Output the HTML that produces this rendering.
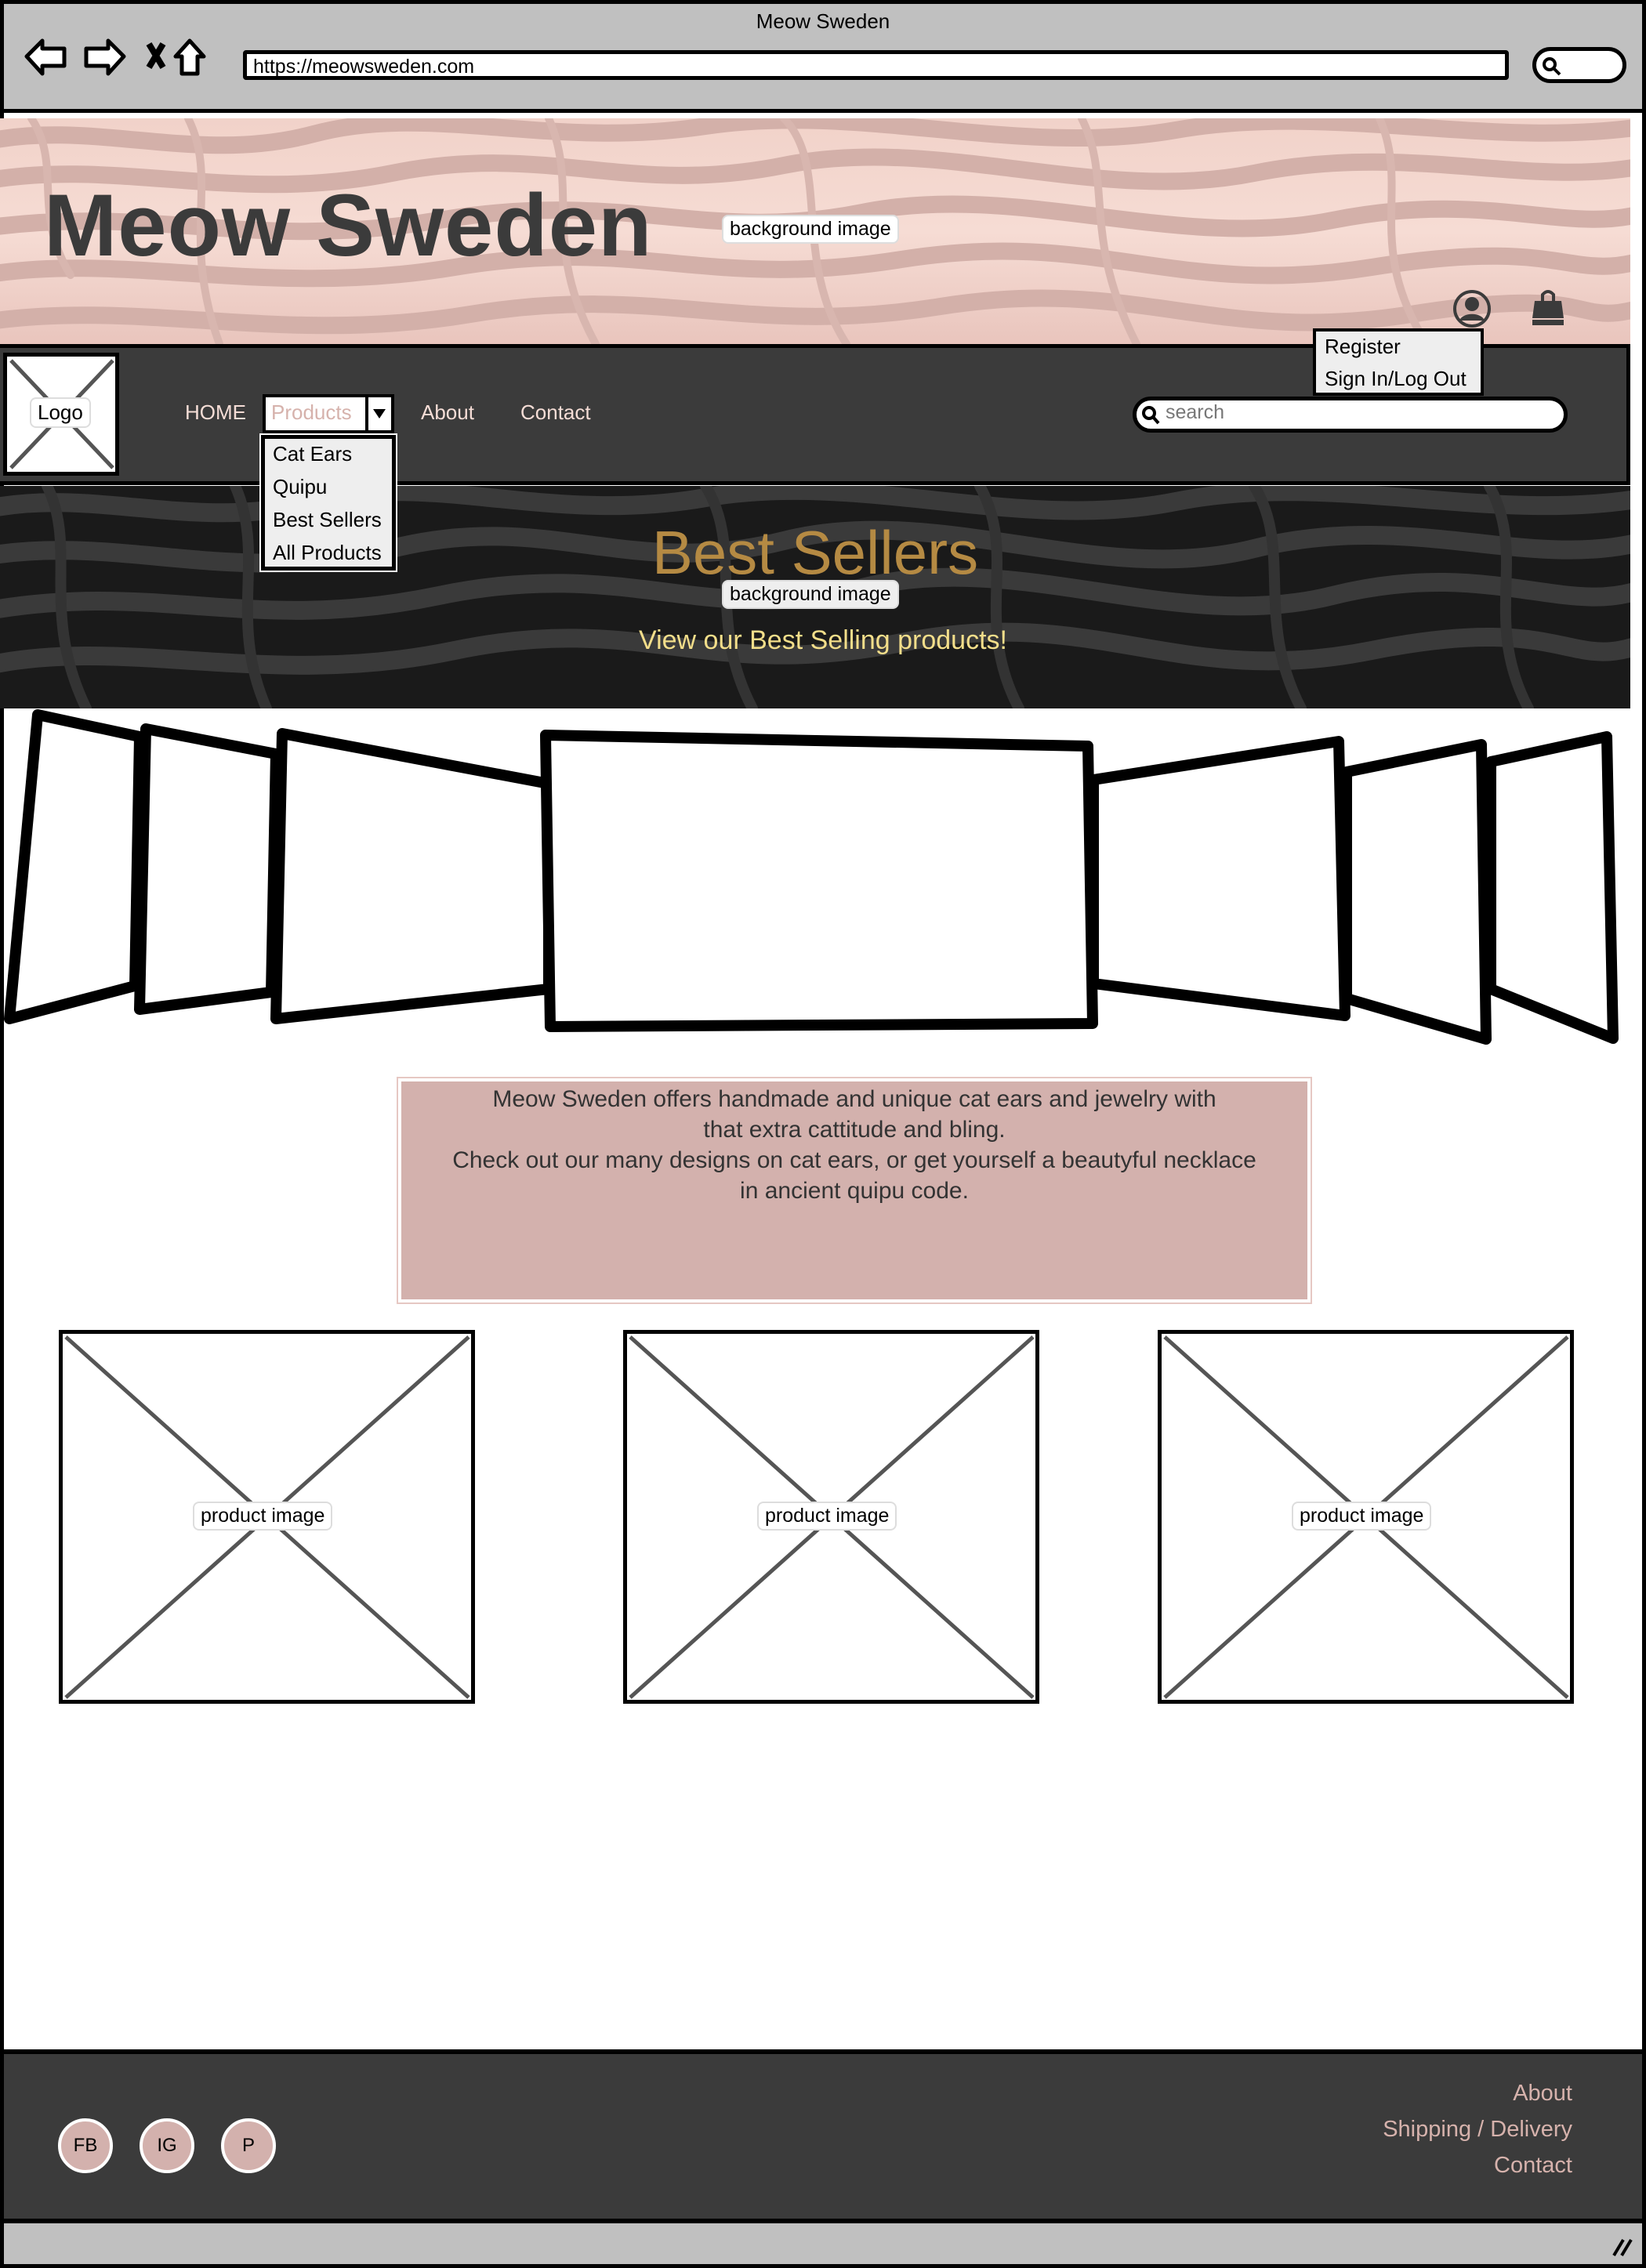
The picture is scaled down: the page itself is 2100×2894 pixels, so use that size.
<!DOCTYPE html>
<html><head><meta charset="utf-8"><style>
*{margin:0;padding:0;box-sizing:border-box}
body{width:2100px;height:2894px;position:relative;overflow:hidden;background:#fff;font-family:"Liberation Sans",sans-serif}
.a{position:absolute}
.lbl{position:absolute;background:#fff;border:2px solid #ddd;border-radius:8px;font-size:25px;color:#000;padding:2px 8px;white-space:nowrap}
</style></head><body>
<div class="a" style="left:0;top:0;width:2100px;height:2894px;border:5px solid #000;"></div>
<div class="a" style="left:5px;top:5px;width:2090px;height:139px;background:#c0c0c0;border-bottom:5px solid #000"></div>
<div class="a" style="left:0;top:12px;width:2100px;text-align:center;font-size:26px;color:#000">Meow Sweden</div>
<svg class="a" style="left:28px;top:44px" width="240" height="60" viewBox="0 0 240 60">
<path d="M6 28 L26 8 L26 18 L54 18 L54 40 L26 40 L26 50 Z" fill="#fff" stroke="#000" stroke-width="5" stroke-linejoin="round"/>
<path d="M130 28 L110 8 L110 18 L82 18 L82 40 L110 40 L110 50 Z" fill="#fff" stroke="#000" stroke-width="5" stroke-linejoin="round"/>
<path d="M162 12 L180 42 M180 12 L162 42" stroke="#000" stroke-width="8"/>
<path d="M232 28 L214 8 L196 28 L204 28 L204 50 L224 50 L224 28 Z" fill="#fff" stroke="#000" stroke-width="5" stroke-linejoin="round"/>
</svg>
<div class="a" style="left:310px;top:64px;width:1615px;height:38px;background:#fff;border:5px solid #000;border-radius:4px;font-size:25px;padding:2px 8px;color:#000">https://meowsweden.com</div>
<div class="a" style="left:1955px;top:60px;width:120px;height:46px;background:#fff;border:5px solid #000;border-radius:24px"></div>
<svg class="a" style="left:1965px;top:70px" width="30" height="30"><circle cx="12" cy="12" r="7" fill="none" stroke="#000" stroke-width="4"/><path d="M17 17 L25 25" stroke="#000" stroke-width="4"/></svg>

<svg class="a" style="left:0;top:151px" width="2080" height="288" viewBox="0 0 2080 288">
<defs><linearGradient id="pg" x1="0" y1="0" x2="0" y2="1"><stop offset="0" stop-color="#f1d2c9"/><stop offset="0.5" stop-color="#f6dcd4"/><stop offset="1" stop-color="#e9c5bd"/></linearGradient></defs>
<rect width="2080" height="288" fill="url(#pg)"/>
<g fill="none" stroke="#d3b0a9" stroke-width="22" stroke-linecap="round">
<path d="M-20 30 C120 0 250 60 400 20 S700 40 900 10 S1300 50 1500 15 S1900 40 2100 10"/>
<path d="M-20 80 C150 50 300 110 500 70 S800 100 1000 60 S1400 110 1600 70 S1950 90 2100 60"/>
<path d="M-20 140 C200 110 320 170 560 130 S900 160 1100 120 S1500 170 1700 130 S2000 150 2100 120"/>
<path d="M-20 200 C160 170 340 230 580 190 S900 220 1150 180 S1500 230 1750 190 S2000 210 2100 180"/>
<path d="M-20 260 C180 230 360 290 600 250 S950 280 1200 240 S1550 290 1800 250 S2000 270 2100 240"/>
</g>
<g fill="none" stroke="#d8b6af" stroke-width="10" stroke-linecap="round">
<path d="M40 0 C80 60 40 120 90 200"/><path d="M240 0 C280 80 230 150 280 288"/><path d="M700 0 C740 90 690 160 760 288"/><path d="M1000 0 C1060 60 1010 180 1080 288"/><path d="M1380 0 C1420 80 1380 150 1450 288"/><path d="M1760 0 C1800 90 1740 160 1820 288"/>
</g>
</svg>
<div class="a" style="left:56px;top:232px;font-size:112px;font-weight:bold;color:#3b3b3b;letter-spacing:1px;line-height:1">Meow Sweden</div>
<div class="lbl" style="left:921px;top:274px">background image</div>
<svg class="a" style="left:1852px;top:368px" width="52" height="52" viewBox="0 0 52 52"><circle cx="26" cy="26" r="22" fill="none" stroke="#3b3b3b" stroke-width="4"/><circle cx="26" cy="20" r="9" fill="#3b3b3b"/><path d="M10 41 C14 30 38 30 42 41 Z" fill="#3b3b3b"/></svg>
<svg class="a" style="left:1950px;top:368px" width="50" height="50" viewBox="0 0 50 50"><path d="M18 16 V8 Q25 0 32 8 V16" fill="none" stroke="#3b3b3b" stroke-width="4"/><path d="M8 16 H42 L45 38 H5 Z" fill="#3b3b3b"/><rect x="5" y="40" width="40" height="7" fill="#3b3b3b"/></svg>

<div class="a" style="left:0;top:439px;width:2080px;height:180px;background:#3b3b3b;border-top:5px solid #000;border-bottom:5px solid #000;border-right:5px solid #000"></div>
<div class="a" style="left:4px;top:450px;width:148px;height:157px;background:#fff;border:5px solid #000"></div>
<svg class="a" style="left:9px;top:455px" width="140" height="147"><path d="M5 5 L135 142 M135 5 L5 142" stroke="#555" stroke-width="5"/></svg>
<div class="lbl" style="left:38px;top:507px;font-size:26px">Logo</div>
<div class="a" style="left:236px;top:511px;font-size:26px;color:#f5ddd6">HOME</div>
<div class="a" style="left:335px;top:503px;width:168px;height:50px;background:#fff;border:4px solid #000"></div>
<div class="a" style="left:466px;top:503px;width:4px;height:50px;background:#000"></div>
<div class="a" style="left:346px;top:511px;font-size:26px;color:#d6b2ac">Products</div>
<svg class="a" style="left:474px;top:520px" width="20" height="16"><path d="M2 2 H18 L10 14 Z" fill="#000"/></svg>
<div class="a" style="left:537px;top:511px;font-size:26px;color:#f5ddd6">About</div>
<div class="a" style="left:664px;top:511px;font-size:26px;color:#f5ddd6">Contact</div>
<div class="a" style="left:1445px;top:506px;width:555px;height:46px;background:#fff;border:5px solid #000;border-radius:24px"></div>
<svg class="a" style="left:1455px;top:516px" width="26" height="28"><circle cx="11" cy="11" r="7" fill="none" stroke="#000" stroke-width="4"/><path d="M16 16 L23 24" stroke="#000" stroke-width="4"/></svg>
<div class="a" style="left:1487px;top:512px;font-size:25px;color:#777">search</div>
<div class="a" style="left:1675px;top:419px;width:218px;height:86px;background:#eee;border:4px solid #000"></div>
<div class="a" style="left:1690px;top:427px;font-size:26px;color:#000">Register</div>
<div class="a" style="left:1690px;top:468px;font-size:26px;color:#000">Sign In/Log Out</div>

<svg class="a" style="left:0;top:620px" width="2080" height="284" viewBox="0 0 2080 284">
<rect width="2080" height="284" fill="#1a1a1a"/>
<g fill="none" stroke="#3a3a3a" stroke-width="24" stroke-linecap="round">
<path d="M-20 30 C120 0 250 60 400 20 S700 50 900 15 S1300 60 1500 20 S1900 50 2100 15"/>
<path d="M-20 90 C150 60 300 130 500 80 S800 120 1000 70 S1400 130 1600 80 S1950 110 2100 70"/>
<path d="M-20 160 C200 120 320 190 560 140 S900 180 1100 130 S1500 190 1700 140 S2000 170 2100 130"/>
<path d="M-20 230 C160 190 340 260 580 210 S900 250 1150 200 S1500 260 1750 210 S2000 240 2100 200"/>
</g>
<g fill="none" stroke="#333" stroke-width="14" stroke-linecap="round">
<path d="M60 0 C100 80 50 160 110 284"/><path d="M300 0 C340 90 290 170 340 284"/><path d="M900 0 C950 80 900 170 960 284"/><path d="M1250 0 C1300 90 1240 170 1300 284"/><path d="M1600 0 C1650 80 1600 170 1660 284"/><path d="M1900 0 C1950 90 1890 170 1950 284"/>
</g>
</svg>
<div class="a" style="left:0;top:666px;width:2080px;text-align:center;font-size:78px;color:#b58a43;line-height:1">Best Sellers</div>
<div class="lbl" style="left:921px;top:740px;background:#eee">background image</div>
<div class="a" style="left:0;top:798px;width:2100px;text-align:center;font-size:34px;color:#f3de8a">View our Best Selling products!</div>
<div class="a" style="left:333px;top:555px;width:172px;height:173px;background:#eee;border:5px solid #000;outline:2px solid #fff"></div>
<div class="a" style="left:348px;top:558px;font-size:26px;color:#000;line-height:42px">Cat Ears<br>Quipu<br>Best Sellers<br>All Products</div>

<svg class="a" style="left:0;top:904px" width="2100" height="440" viewBox="0 904 2100 440">
<g fill="#fff" stroke="#000" stroke-width="14" stroke-linejoin="round">
<path d="M48 912 L178 940 L172 1258 L12 1300 Z"/>
<path d="M186 930 L352 962 L346 1266 L178 1288 Z"/>
<path d="M360 936 L700 1000 L700 1262 L352 1300 Z"/>
<path d="M1395 995 L1708 946 L1716 1296 L1395 1255 Z"/>
<path d="M1718 985 L1890 950 L1896 1326 L1718 1274 Z"/>
<path d="M1902 972 L2050 940 L2058 1325 L1902 1262 Z"/>
<path d="M696 938 L1388 952 L1394 1306 L702 1310 Z"/>
</g>
</svg>

<div class="a" style="left:506px;top:1374px;width:1168px;height:290px;border:2px solid #e6c8c3"></div>
<div class="a" style="left:512px;top:1380px;width:1156px;height:278px;background:#d3b1ad"></div>
<div class="a" style="left:512px;top:1383px;width:1156px;text-align:center;font-size:30px;line-height:39px;color:#333">Meow Sweden offers handmade and unique cat ears and jewelry with<br>that extra cattitude and bling.<br>Check out our many designs on cat ears, or get yourself a beautyful necklace<br>in ancient quipu code.</div>

<div class="a" style="left:75px;top:1697px;width:531px;height:477px;border:5px solid #000"></div>
<div class="a" style="left:795px;top:1697px;width:531px;height:477px;border:5px solid #000"></div>
<div class="a" style="left:1477px;top:1697px;width:531px;height:477px;border:5px solid #000"></div>
<svg class="a" style="left:0;top:1690px" width="2100" height="500" viewBox="0 1690 2100 500">
<g stroke="#555" stroke-width="5">
<path d="M84 1706 L598 2166 M598 1706 L84 2166"/>
<path d="M804 1706 L1318 2166 M1318 1706 L804 2166"/>
<path d="M1486 1706 L2000 2166 M2000 1706 L1486 2166"/>
</g></svg>
<div class="lbl" style="left:246px;top:1916px">product image</div>
<div class="lbl" style="left:966px;top:1916px">product image</div>
<div class="lbl" style="left:1648px;top:1916px">product image</div>

<div class="a" style="left:5px;top:2615px;width:2090px;height:222px;background:#3b3b3b;border-top:6px solid #000;border-bottom:6px solid #000"></div>
<div class="a" style="left:5px;top:2837px;width:2090px;height:52px;background:#c0c0c0"></div>
<svg class="a" style="left:2055px;top:2852px" width="30" height="30"><path d="M4 26 L16 6 M14 26 L26 6" stroke="#000" stroke-width="4"/></svg>
<div class="a" style="left:74px;top:2703px;width:70px;height:70px;border-radius:50%;background:#d3b1ad;border:4px solid #fff;font-size:24px;text-align:center;line-height:62px;color:#000">FB</div>
<div class="a" style="left:178px;top:2703px;width:70px;height:70px;border-radius:50%;background:#d3b1ad;border:4px solid #fff;font-size:24px;text-align:center;line-height:62px;color:#000">IG</div>
<div class="a" style="left:282px;top:2703px;width:70px;height:70px;border-radius:50%;background:#d3b1ad;border:4px solid #fff;font-size:24px;text-align:center;line-height:62px;color:#000">P</div>
<div class="a" style="right:94px;top:2648px;text-align:right;font-size:29px;line-height:46px;color:#d6b2ac">About<br>Shipping / Delivery<br>Contact</div>
</body></html>
